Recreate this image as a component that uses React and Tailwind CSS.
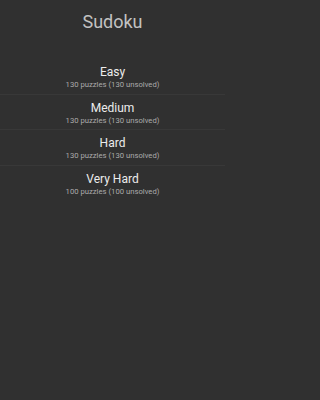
const levels = [
  { name: "Easy", total: 130, unsolved: 130 },
  { name: "Medium", total: 130, unsolved: 130 },
  { name: "Hard", total: 130, unsolved: 130 },
  { name: "Very Hard", total: 100, unsolved: 100 },
];

const LevelRow = ({ name, total, unsolved }) => (
  <button
    type="button"
    className="flex h-[35.5px] w-full flex-col items-center justify-center border-b border-[#383838] pt-[3px] text-center last:border-b-0"
  >
    <span className="text-[12px] leading-[14px] text-[#ececec]">{name}</span>
    <span className="text-[7.7px] leading-[11px] text-[#ababab]">
      {total} puzzles ({unsolved} unsolved)
    </span>
  </button>
);

export default function App() {
  return (
    <div className="min-h-screen w-full bg-[#303030] font-['Roboto',sans-serif]">
      <div className="flex min-h-[400px] w-[225px] flex-col">
        <h1 className="pt-[11px] text-center text-[18px] leading-[22px] text-[#c2c2c2]">Sudoku</h1>
        <div className="mt-[26px] flex flex-col">
          {levels.map((l) => (
            <LevelRow key={l.name} {...l} />
          ))}
        </div>
      </div>
    </div>
  );
}
